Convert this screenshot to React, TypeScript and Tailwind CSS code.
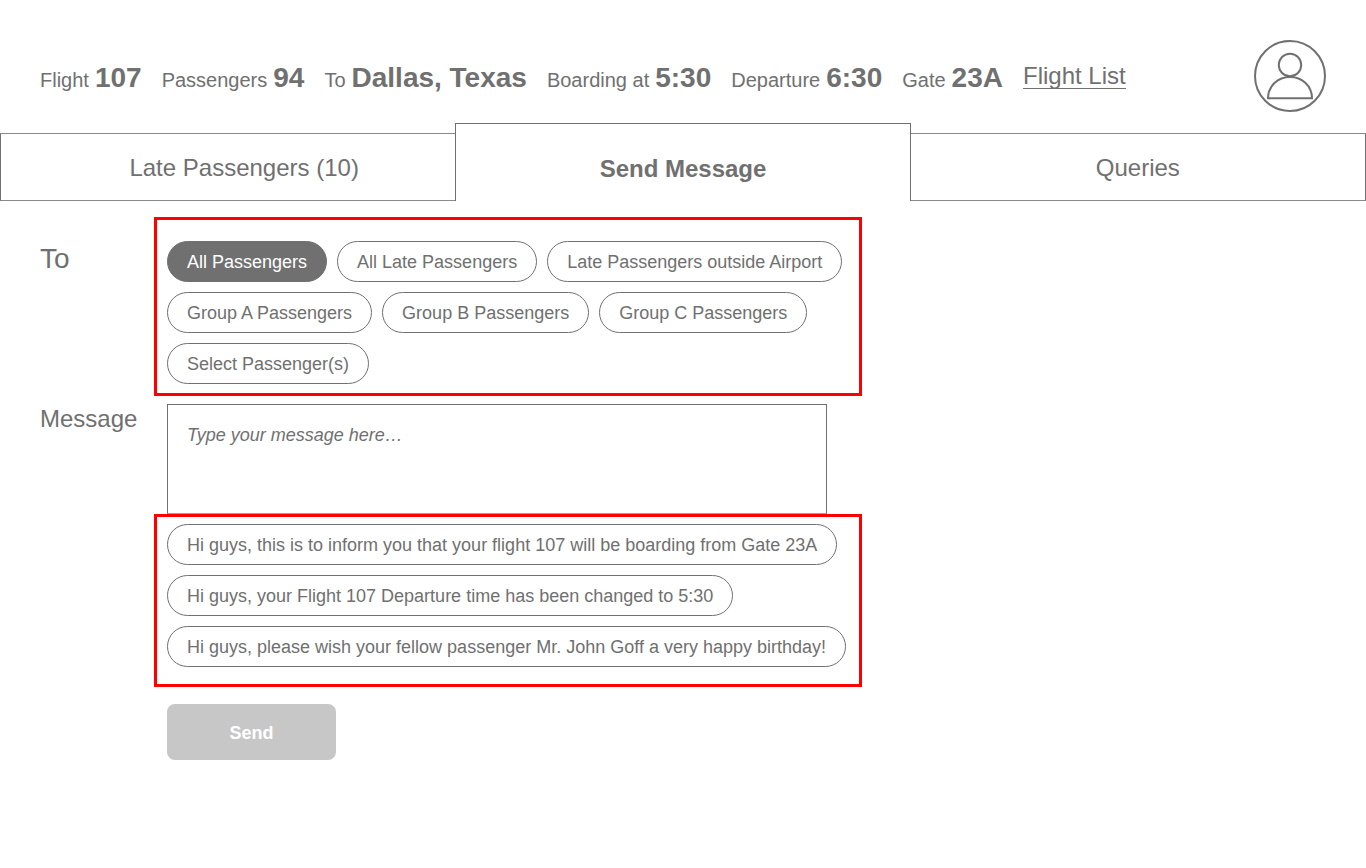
import { useState } from 'react';
import clsx from 'clsx';

const flightInfo = [
  { label: 'Flight', value: '107' },
  { label: 'Passengers', value: '94' },
  { label: 'To', value: 'Dallas, Texas' },
  { label: 'Boarding at', value: '5:30' },
  { label: 'Departure', value: '6:30' },
  { label: 'Gate', value: '23A' },
];

const recipients = [
  'All Passengers',
  'All Late Passengers',
  'Late Passengers outside Airport',
  'Group A Passengers',
  'Group B Passengers',
  'Group C Passengers',
  'Select Passenger(s)',
];

const templates = [
  'Hi guys, this is to inform you that your flight 107 will be boarding from Gate 23A',
  'Hi guys, your Flight 107 Departure time has been changed to 5:30',
  'Hi guys, please wish your fellow passenger Mr. John Goff a very happy birthday!',
];

const Avatar = () => (
  <svg className="size-18" viewBox="0 0 72 72" fill="none" stroke="currentColor" strokeWidth="2" aria-hidden="true">
    <circle cx="36" cy="36" r="35" />
    <circle cx="36" cy="25" r="11.2" />
    <path d="M14 58.2C14 46 23.8 37 36 37s22 9 22 21.2z" />
  </svg>
);

const Header = () => (
  <header className="flex items-start justify-between px-10 pt-10">
    <div className="flex flex-wrap items-baseline gap-x-5 pt-5">
      {flightInfo.map(({ label, value }) => (
        <p key={label} className="flex items-baseline gap-1.5 text-xl leading-9">
          {label} <strong className="text-[28px] leading-9">{value}</strong>
        </p>
      ))}
      <a href="#flights" className="mt-1 self-start border-b border-[#707070] text-2xl leading-6">
        Flight List
      </a>
    </div>
    <button type="button" aria-label="Profile" className="shrink-0 rounded-full">
      <Avatar />
    </button>
  </header>
);

const Tabs = () => (
  <nav className="mt-[11px] grid grid-cols-3 items-end text-2xl">
    <button type="button" className="h-[68px] border-y border-l border-y-[#8a8a8a] border-l-[#707070] pt-0.5 pl-8">
      Late Passengers (10)
    </button>
    <button type="button" aria-current="page" className="h-[78px] border-x border-t border-[#707070] pt-3 font-bold">
      Send Message
    </button>
    <button type="button" className="h-[68px] border-y border-r border-y-[#8a8a8a] border-r-[#707070] pt-0.5">
      Queries
    </button>
  </nav>
);

type PillProps = { text: string; active?: boolean; onClick: () => void };

const Pill = ({ text, active = false, onClick }: PillProps) => (
  <button
    type="button"
    aria-pressed={active}
    onClick={onClick}
    className={clsx(
      'min-h-[41px] rounded-[21px] border border-[#707070] px-[19px] text-lg',
      active ? 'bg-[#707070] text-white' : 'bg-white',
    )}
  >
    {text}
  </button>
);

const MessageForm = () => {
  const [to, setTo] = useState(recipients[0]);
  const [message, setMessage] = useState('');

  return (
    <form className="grid grid-cols-[114px_minmax(0,708px)] px-10 pt-4" onSubmit={(e) => e.preventDefault()}>
      <span id="to-label" className="pt-6 text-[28px] leading-9">To</span>
      <div
        role="group"
        aria-labelledby="to-label"
        className="flex flex-wrap gap-2.5 border-3 border-[#ff0000] pt-[21px] pb-[9px] pl-2.5"
      >
        {recipients.map((name) => (
          <Pill key={name} text={name} active={name === to} onClick={() => setTo(name)} />
        ))}
      </div>

      <label htmlFor="message" className="mt-2 text-2xl leading-[30px]">Message</label>
      <textarea
        id="message"
        value={message}
        onChange={(e) => setMessage(e.target.value)}
        placeholder="Type your message here…"
        className="mt-2 ml-[13px] block h-[110px] max-w-[660px] resize-none border border-[#707070] border-b-[#a0a0a0] px-[19px] py-4 text-lg placeholder:text-[#707070] placeholder:italic"
      />

      <div className="col-start-2 flex flex-col items-start gap-2.5 border-3 border-[#ff0000] pt-[7px] pb-[17px] pl-2.5">
        {templates.map((text) => (
          <Pill key={text} text={text} onClick={() => setMessage(text)} />
        ))}
      </div>

      <button
        type="submit"
        disabled={!message}
        className="col-start-2 mt-[17px] ml-[13px] h-14 w-[169px] rounded-lg bg-[#707070] pt-0.5 text-lg font-bold text-white disabled:bg-[#c7c7c7]"
      >
        Send
      </button>
    </form>
  );
};

const App = () => (
  <div className="min-h-screen bg-white pb-10 font-['Liberation_Sans',Arial,sans-serif] text-[#707070]">
    <Header />
    <Tabs />
    <MessageForm />
  </div>
);

export default App;
